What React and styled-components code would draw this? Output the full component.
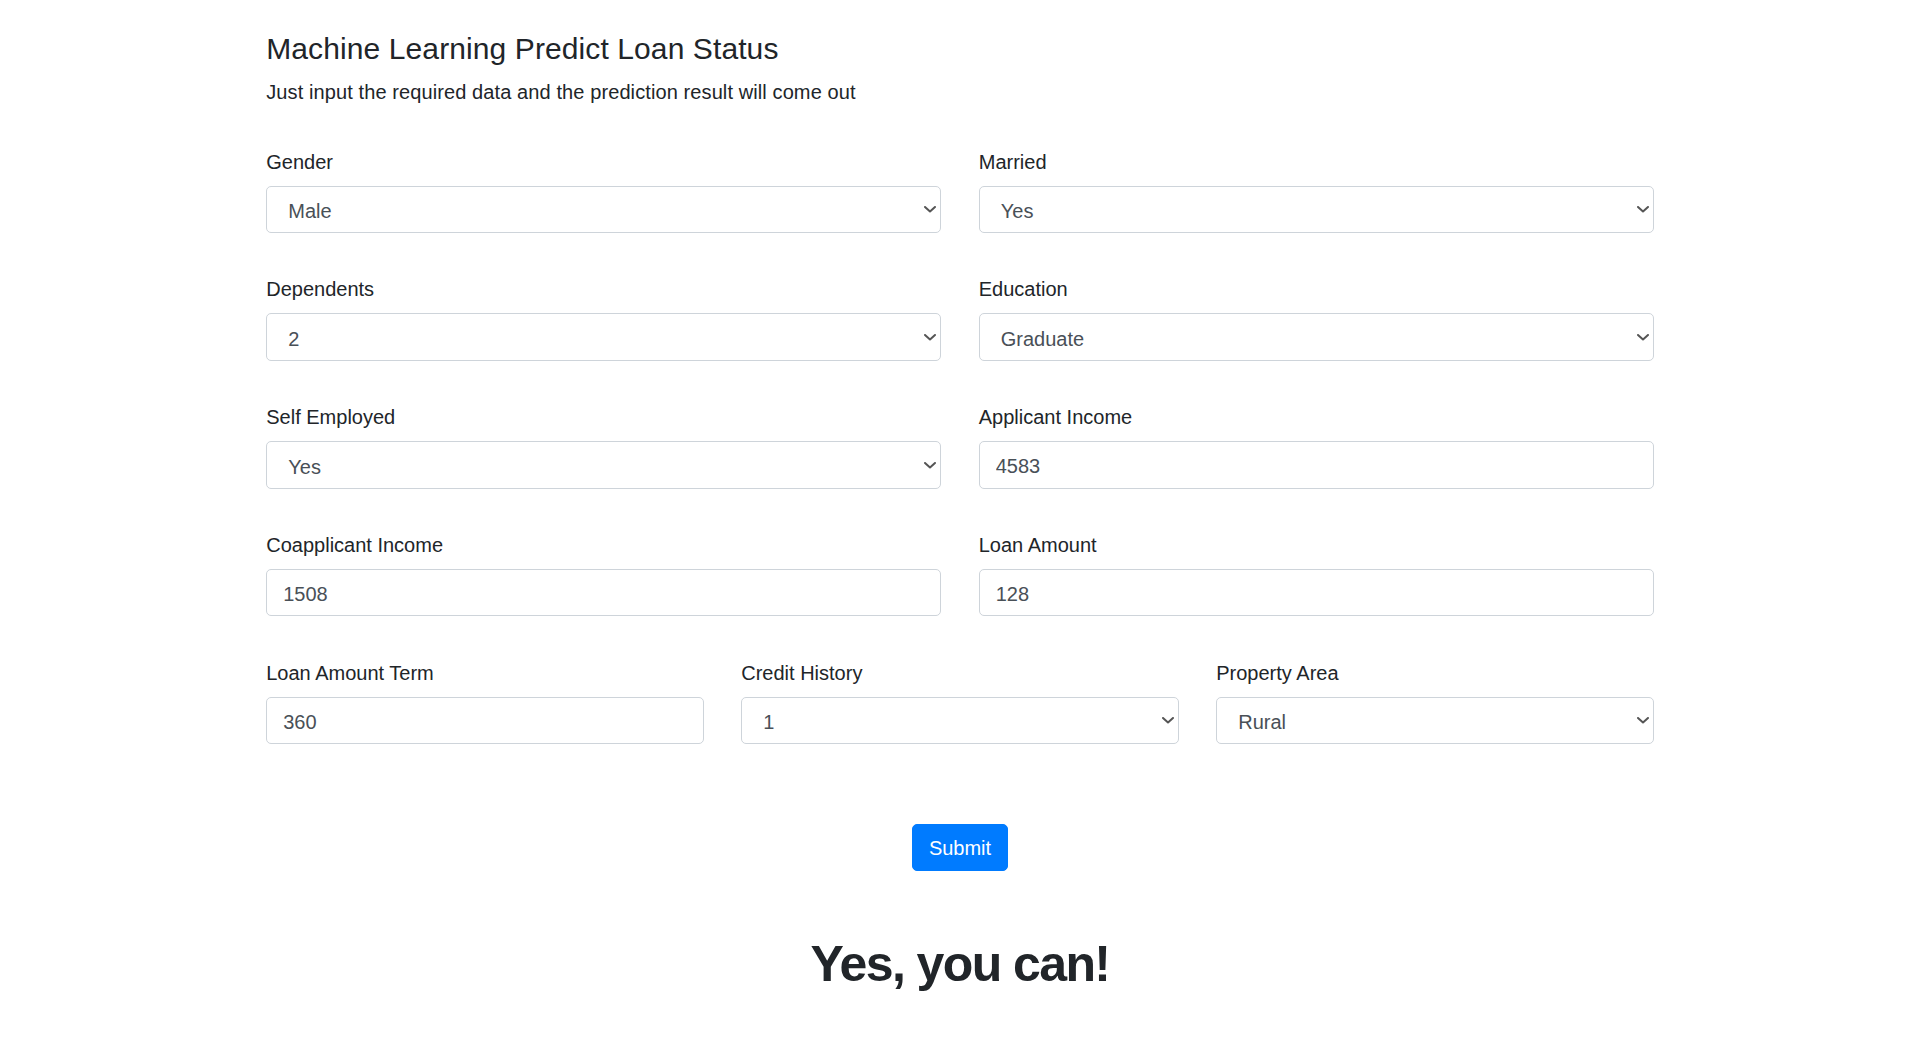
import React from "react";
import styled, { createGlobalStyle } from "styled-components";

const GlobalStyle = createGlobalStyle`
  html, body { margin: 0; padding: 0; background: #fff; }
  body {
    font-family: "Liberation Sans", Arial, sans-serif;
    font-size: 20px;
    line-height: 30px;
    color: #212529;
  }
  * { box-sizing: border-box; }
`;

const Container = styled.main`
  width: 1387.5px;
  margin: 0 auto;
  padding-top: 31px;
`;

const Title = styled.h4`
  margin: 0 0 10px;
  font-size: 30px;
  line-height: 36px;
  font-weight: 400;
  letter-spacing: 0.1px;
  color: #212529;
`;

const Lead = styled.p`
  margin: 0 0 39.5px;
  font-size: 20px;
  line-height: 30px;
  letter-spacing: 0.1px;
`;

const Row = styled.div`
  display: grid;
  grid-template-columns: repeat(${(p) => p.$cols}, 1fr);
  column-gap: 37.5px;
`;

const Field = styled.div`
  display: flex;
  flex-direction: column;
  margin-bottom: 41.3px;
`;

const Label = styled.label`
  display: block;
  margin-bottom: 9px;
  font-size: 20px;
  line-height: 30px;
  color: #212529;
`;

const controlBase = `
  display: block;
  width: 100%;
  height: 47.5px;
  margin: 0;
  border: 1px solid #ced4da;
  border-radius: 5px;
  background: #fff;
  color: #495057;
  font-family: "Liberation Sans", Arial, sans-serif;
  font-size: 20px;
  line-height: 30px;
  outline: none;
`;

const TextInput = styled.input`
  ${controlBase}
  padding: 4px 15px 0 16px;
`;

const SelectWrap = styled.div`
  position: relative;
`;

const Select = styled.select`
  ${controlBase}
  appearance: none;
  -webkit-appearance: none;
  padding: 4px 30px 0 21px;
`;

const Chevron = styled.svg`
  position: absolute;
  right: 5px;
  top: 50%;
  margin-top: -3px;
  width: 12px;
  height: 7px;
  pointer-events: none;
`;

const Actions = styled.div`
  display: flex;
  justify-content: center;
  margin-top: 38.5px;
`;

const SubmitButton = styled.button`
  height: 47.5px;
  padding: 1px 16px 0;
  border: 1px solid #007bff;
  border-radius: 5px;
  background: #007bff;
  color: #fff;
  font-family: "Liberation Sans", Arial, sans-serif;
  font-size: 20px;
  line-height: 30px;
  cursor: pointer;
`;

const Result = styled.h1`
  margin: 63px 0 0;
  text-align: center;
  font-size: 50px;
  line-height: 60px;
  font-weight: 700;
  letter-spacing: -1.6px;
  color: #212529;
`;

function SelectField({ label, value, options }) {
  return (
    <Field>
      <Label>{label}</Label>
      <SelectWrap>
        <Select defaultValue={value}>
          {options.map((o) => (
            <option key={o} value={o}>
              {o}
            </option>
          ))}
        </Select>
        <Chevron viewBox="0 0 12 7">
          <polyline
            points="1,1 6,5.5 11,1"
            fill="none"
            stroke="#555"
            strokeWidth="2"
            strokeLinecap="round"
            strokeLinejoin="round"
          />
        </Chevron>
      </SelectWrap>
    </Field>
  );
}

function InputField({ label, value }) {
  return (
    <Field>
      <Label>{label}</Label>
      <TextInput type="text" defaultValue={value} />
    </Field>
  );
}

export default function App() {
  return (
    <>
      <GlobalStyle />
      <Container>
        <Title>Machine Learning Predict Loan Status</Title>
        <Lead>Just input the required data and the prediction result will come out</Lead>
        <form onSubmit={(e) => e.preventDefault()}>
          <Row $cols={2}>
            <SelectField label="Gender" value="Male" options={["Male", "Female"]} />
            <SelectField label="Married" value="Yes" options={["Yes", "No"]} />
          </Row>
          <Row $cols={2}>
            <SelectField label="Dependents" value="2" options={["0", "1", "2", "3+"]} />
            <SelectField label="Education" value="Graduate" options={["Graduate", "Not Graduate"]} />
          </Row>
          <Row $cols={2}>
            <SelectField label="Self Employed" value="Yes" options={["Yes", "No"]} />
            <InputField label="Applicant Income" value="4583" />
          </Row>
          <Row $cols={2}>
            <InputField label="Coapplicant Income" value="1508" />
            <InputField label="Loan Amount" value="128" />
          </Row>
          <Row $cols={3}>
            <InputField label="Loan Amount Term" value="360" />
            <SelectField label="Credit History" value="1" options={["1", "0"]} />
            <SelectField label="Property Area" value="Rural" options={["Rural", "Semiurban", "Urban"]} />
          </Row>
          <Actions>
            <SubmitButton type="submit">Submit</SubmitButton>
          </Actions>
        </form>
        <Result>Yes, you can!</Result>
      </Container>
    </>
  );
}
